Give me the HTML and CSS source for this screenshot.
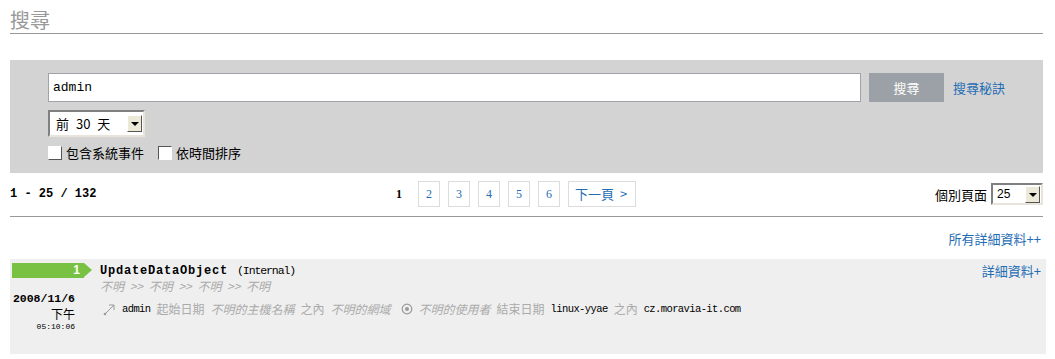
FILE: index.html
```html
<!DOCTYPE html>
<html lang="zh-Hant">
  <head>
    <meta charset="UTF-8" />
    <title>搜尋</title>
    <link rel="stylesheet" href="styles.css">
  </head>
  <body>
    <div class="page">
      <h1 class="page-title">搜尋</h1>

      <div class="search-panel">
        <div class="search-row">
          <div class="search-input">admin</div>
          <button class="search-button">搜尋</button>
          <a class="link search-tips" href="#">搜尋秘訣</a>
        </div>
        <div class="fake-select range-select">
          <span class="fake-select-value">前 30 天</span>
          <span class="fake-select-arrow"></span>
        </div>
        <div class="check-row">
          <label class="check"><span class="check-box"></span>包含系統事件</label>
          <label class="check"><span class="check-box check-box-dark"></span>依時間排序</label>
        </div>
      </div>

      <div class="pager-row">
        <div class="pager-count">1 - 25 / 132</div>
        <div class="pager">
          <span class="pager-current">1</span>
          <a class="pager-item" href="#">2</a>
          <a class="pager-item" href="#">3</a>
          <a class="pager-item" href="#">4</a>
          <a class="pager-item" href="#">5</a>
          <a class="pager-item" href="#">6</a>
          <a class="pager-item pager-next" href="#">下一頁 &gt;</a>
        </div>
        <div class="per-page">
          <span>個別頁面</span>
          <div class="fake-select per-page-select">
            <span class="fake-select-value">25</span>
            <span class="fake-select-arrow"></span>
          </div>
        </div>
      </div>

      <div class="all-details"><a class="link" href="#">所有詳細資料++</a></div>

      <div class="result">
        <div class="result-side">
          <div class="badge">1</div>
          <div class="result-date">
            <div class="date-day">2008/11/6</div>
            <div class="date-ampm">下午</div>
            <div class="date-time">05:10:06</div>
          </div>
        </div>
        <div class="result-main">
          <div class="result-title"><b>UpdateDataObject</b><span class="result-type">(Internal)</span></div>
          <div class="result-path">不明 &gt;&gt; 不明 &gt;&gt; 不明 &gt;&gt; 不明</div>
          <div class="result-detail">
            <svg class="icon" width="13" height="13" viewBox="0 0 13 13">
              <line x1="2" y1="11" x2="11" y2="2" stroke="#999" stroke-width="1" />
              <polyline points="6,2 11,2 11,7" fill="none" stroke="#999" stroke-width="1" />
              <circle cx="2" cy="11" r="1.3" fill="#999" />
            </svg>
            <span class="mono">admin</span>
            <span class="muted">起始日期</span>
            <i class="muted">不明的主機名稱</i>
            <span class="muted">之內</span>
            <i class="muted">不明的網域</i>
            <svg class="icon icon-gap" width="12" height="12" viewBox="0 0 12 12">
              <circle cx="6" cy="6" r="4.8" fill="none" stroke="#999" stroke-width="1.2" />
              <circle cx="6" cy="6" r="2" fill="#999" />
            </svg>
            <i class="muted">不明的使用者</i>
            <span class="muted">結束日期</span>
            <span class="mono">linux-yyae</span>
            <span class="muted">之內</span>
            <span class="mono">cz.moravia-it.com</span>
          </div>
        </div>
        <div class="result-more"><a class="link" href="#">詳細資料+</a></div>
      </div>
    </div>
  </body>
</html>
```

FILE: styles.css
```css
body {
  margin: 0;
  padding: 0;
  background-color: #fff;
  color: #000;
  font-family: 'Noto Sans CJK TC', 'Liberation Sans', sans-serif;
  font-size: 13px;
}
.page {
  padding: 0 12px 0 10px;
}
.link {
  color: #1f6db5;
  text-decoration: none;
}
.mono {
  font-family: 'Liberation Mono', 'Noto Sans CJK TC', monospace;
}
.page-title {
  margin: 0 0 26px;
  padding-top: 7px;
  font-size: 20px;
  line-height: 26px;
  font-weight: normal;
  color: #999;
  border-bottom: 1px solid #999;
}

/* search box */
.search-panel {
  background-color: #d3d3d3;
  height: 113px;
  box-sizing: border-box;
  padding: 13px 0 0 38px;
}
.search-row {
  display: flex;
  align-items: center;
  height: 29px;
}
.search-input {
  width: 813px;
  height: 29px;
  box-sizing: border-box;
  border: 1px solid #a0a4a8;
  background-color: #fff;
  padding: 0 4px;
  font-family: 'Liberation Mono', monospace;
  font-size: 13px;
  line-height: 27px;
}
.search-button {
  margin-left: 8px;
  width: 75px;
  height: 29px;
  border: none;
  background-color: #9ba1a6;
  color: #fff;
  font-family: 'Noto Sans CJK TC', sans-serif;
  font-size: 13px;
  padding: 0;
}
.search-tips {
  margin-left: 9px;
}
.fake-select {
  display: flex;
  align-items: center;
  justify-content: space-between;
  box-sizing: border-box;
  background-color: #fff;
  border-top: 2px solid #808080;
  border-left: 2px solid #808080;
  border-right: 2px solid #e8e4dc;
  border-bottom: 2px solid #e8e4dc;
}
.fake-select-arrow {
  position: relative;
  width: 15px;
  height: 17px;
  box-sizing: border-box;
  background-color: #ece9d8;
  border-top: 1px solid #fff;
  border-left: 1px solid #fff;
  border-right: 1px solid #555;
  border-bottom: 1px solid #555;
}
.fake-select-arrow::after {
  content: "";
  position: absolute;
  left: 3px;
  top: 6px;
  border-left: 4px solid transparent;
  border-right: 4px solid transparent;
  border-top: 4px solid #000;
}
.range-select {
  margin-top: 8px;
  width: 97px;
  height: 27px;
  padding: 0 1px 0 6px;
  word-spacing: 4px;
}
.check-row {
  display: flex;
  align-items: center;
  margin-top: 7px;
}
.check {
  display: flex;
  align-items: center;
  margin-right: 14px;
  line-height: 18px;
}
.check-box {
  width: 12px;
  height: 12px;
  margin-right: 4px;
  background-color: #fff;
  border-top: 1px solid #fff;
  border-left: 1px solid #fff;
  border-right: 1px solid #555;
  border-bottom: 1px solid #555;
}
.check-box-dark {
  border-top-color: #555;
  border-left-color: #555;
  border-right-color: #fff;
  border-bottom-color: #fff;
}

/* pager */
.pager-row {
  display: flex;
  align-items: center;
  justify-content: space-between;
  padding: 8px 0 9px;
  border-bottom: 1px solid #999;
}
.pager-count {
  width: 386px;
  font-family: 'Liberation Mono', monospace;
  font-size: 12px;
  font-weight: bold;
}
.pager {
  display: flex;
  align-items: center;
  flex: 1;
}
.pager-current {
  font-family: 'Liberation Serif', serif;
  font-weight: bold;
  font-size: 12px;
  width: 22px;
}
.pager-item {
  box-sizing: border-box;
  min-width: 22px;
  height: 26px;
  margin-right: 8px;
  border: 1px solid #dcdcdc;
  color: #1f6db5;
  text-decoration: none;
  font-family: 'Liberation Serif', 'Noto Sans CJK TC', serif;
  font-size: 12px;
  line-height: 24px;
  text-align: center;
}
.pager-next {
  padding: 0 8px 0 6px;
  font-size: 13px;
  font-family: 'Noto Sans CJK TC', sans-serif;
  word-spacing: 3px;
}
.per-page {
  display: flex;
  align-items: center;
  gap: 4px;
}
.per-page-select {
  width: 52px;
  height: 22px;
  padding: 0 1px 0 4px;
  font-family: 'Liberation Sans', sans-serif;
  font-size: 12px;
}

.all-details {
  text-align: right;
  padding-right: 2px;
  margin-top: 15px;
  line-height: 14px;
}

/* result */
.result {
  display: flex;
  margin: 13px -3px 0 0;
  height: 95px;
  box-sizing: border-box;
  padding-top: 4px;
  background-color: #efefef;
}
.result-side {
  width: 90px;
}
.badge {
  position: relative;
  margin-left: 2px;
  width: 72px;
  height: 15px;
  box-sizing: border-box;
  padding-right: 4px;
  background-color: #79c142;
  color: #fff;
  font-family: 'Liberation Sans', sans-serif;
  font-weight: bold;
  font-size: 12px;
  line-height: 15px;
  text-align: right;
}
.badge::after {
  content: "";
  position: absolute;
  right: -8px;
  top: 0;
  border-top: 7.5px solid transparent;
  border-bottom: 7.5px solid transparent;
  border-left: 8px solid #79c142;
}
.result-date {
  margin-top: 14px;
  padding-right: 25px;
  text-align: right;
}
.date-day {
  font-family: 'Liberation Mono', monospace;
  font-weight: bold;
  font-size: 11.5px;
  line-height: 14px;
}
.date-ampm {
  font-size: 12px;
  line-height: 15px;
}
.date-time {
  font-family: 'Liberation Mono', monospace;
  font-size: 8px;
  line-height: 12px;
}
.result-main {
  flex: 1;
}
.result-title {
  font-family: 'Liberation Mono', monospace;
  font-size: 12px;
  line-height: 16px;
}
.result-title b {
  letter-spacing: 0.8px;
}
.result-type {
  margin-left: 9px;
  font-size: 11.5px;
  letter-spacing: -1.1px;
}
.result-path {
  font-size: 12px;
  line-height: 14px;
  color: #aaa;
  font-style: italic;
  word-spacing: 3px;
}
.result-detail {
  display: flex;
  align-items: center;
  gap: 6px;
  margin-top: 9px;
  padding-left: 3px;
  font-size: 12px;
  line-height: 14px;
}
.result-detail .mono {
  font-size: 10.5px;
  letter-spacing: -0.6px;
}
.muted {
  color: #aaa;
}
.icon-gap {
  margin-left: 4px;
}
.result-more {
  padding-right: 5px;
  line-height: 16px;
}
```
